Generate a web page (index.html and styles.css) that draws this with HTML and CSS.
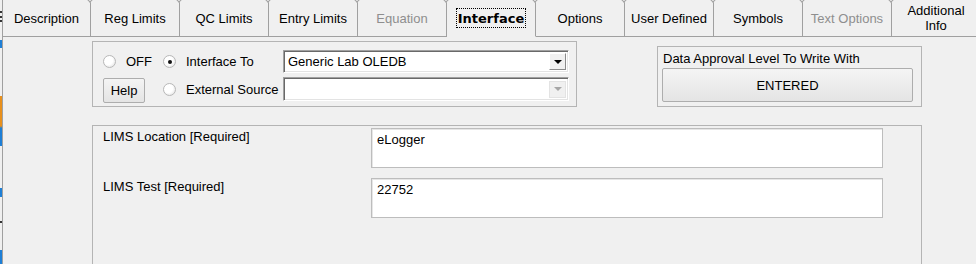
FILE: index.html
```html
<!DOCTYPE html>
<html lang="en">
<head>
  <meta charset="UTF-8">
  <title>Interface</title>
  <link rel="stylesheet" href="styles.css">
</head>
<body>
  <div class="window">
    <div class="edge"></div>
    <div class="main">
      <div class="tabs">
        <div class="tab first">Description</div>
        <div class="tab">Reg Limits</div>
        <div class="tab">QC Limits</div>
        <div class="tab">Entry Limits</div>
        <div class="tab disabled">Equation</div>
        <div class="tab active"><span class="focus">Interface</span></div>
        <div class="tab">Options</div>
        <div class="tab">User Defined</div>
        <div class="tab">Symbols</div>
        <div class="tab disabled">Text Options</div>
        <div class="tab">Additional<br>Info</div>
      </div>

      <div class="panel">
        <div class="top-row">
          <div class="group source">
            <label class="radio"><span class="dot"></span>OFF</label>
            <label class="radio checked"><span class="dot"></span>Interface To</label>
            <div class="combo">
              <span class="value">Generic Lab OLEDB</span>
              <span class="drop"><span class="arrow"></span></span>
            </div>

            <div class="cell"><button class="btn help">Help</button></div>
            <label class="radio"><span class="dot"></span>External Source</label>
            <div class="combo disabled">
              <span class="value"></span>
              <span class="drop"><span class="arrow"></span></span>
            </div>
          </div>

          <div class="group approval">
            <div class="caption">Data Approval Level To Write With</div>
            <button class="btn level">ENTERED</button>
          </div>
        </div>

        <div class="group lims">
          <div class="field">
            <span class="label">LIMS Location [Required]</span>
            <div class="textbox">eLogger</div>
          </div>
          <div class="field">
            <span class="label">LIMS Test [Required]</span>
            <div class="textbox">22752</div>
          </div>
        </div>
      </div>
    </div>
  </div>
</body>
</html>
```

FILE: styles.css
```css
body {
  margin: 0;
  width: 976px;
  height: 264px;
  overflow: hidden;
  background-color: #f0f0f0;
  font-family: "Liberation Sans", Arial, sans-serif;
  font-size: 13px;
  color: #000;
}

.window {
  display: flex;
  height: 264px;
  overflow: hidden;
}

/* bits of the window behind, peeking out on the left */
.edge {
  flex: none;
  width: 2px;
  background: linear-gradient(to bottom,
    #f0f0f0 0 11px, #333 11px 13px, #f0f0f0 13px 16px, #333 16px 18px,
    #f0f0f0 18px 20px, #333 20px 22px, #f0f0f0 22px 40px,
    #1e7fd6 40px 48px, #f0f0f0 48px 96px, #e8901c 96px 126px,
    #1e7fd6 128px 146px, #f0f0f0 146px 188px, #1e7fd6 188px 197px,
    #f0f0f0 197px 221px, #333 221px 223px, #f0f0f0 223px 250px,
    #1e7fd6 250px);
}

.main {
  flex: 1;
  min-width: 0;
  border-left: 1px solid #a0a0a0;
}

/* tab strip */
.tabs {
  display: flex;
  height: 37px;
}

.tab {
  flex: 0 0 89px;
  box-sizing: border-box;
  height: 37px;
  position: relative;
  display: flex;
  align-items: center;
  justify-content: center;
  text-align: center;
  line-height: 15px;
  border-right: 1px solid #a0a0a0;
  border-bottom: 1px solid #a0a0a0;
}

.tab.first {
  flex-basis: 88px;
}

.tab + .tab::before {
  content: "";
  position: absolute;
  left: -5px;
  top: -7px;
  width: 7px;
  height: 7px;
  border-right: 1px solid #a0a0a0;
  border-bottom: 1px solid #a0a0a0;
  background-color: #f0f0f0;
  transform: rotate(45deg);
}

.tab.disabled {
  color: #8e8e8e;
}

.tab.active {
  border-bottom-color: transparent;
}

.focus {
  font-family: "DejaVu Sans", sans-serif;
  font-weight: bold;
  font-size: 13px;
  padding: 2px 1px 1px;
  outline: 1px dotted #000;
}

/* page content */
.panel {
  height: 227px;
  overflow: hidden;
  padding-left: 89px;
}

.top-row {
  display: flex;
  align-items: flex-end;
  gap: 80px;
  margin-top: 4px;
}

.group {
  box-sizing: border-box;
  border: 1px solid #b4b4b4;
}

.source {
  width: 485px;
  height: 66px;
  padding: 8px 7px 0 10px;
  display: grid;
  grid-template-columns: 60px 120px 286px;
  grid-template-rows: 23px 24px;
  row-gap: 4px;
  align-items: center;
}

.radio {
  display: flex;
  align-items: center;
  white-space: nowrap;
}

.dot {
  width: 11px;
  height: 11px;
  margin-right: 10px;
  border: 1px solid #b8b8b8;
  border-radius: 50%;
  background: radial-gradient(circle at 40% 40%, #fff 0 45%, #e6e6e6 80%);
  display: flex;
  align-items: center;
  justify-content: center;
}

.radio.checked .dot::after {
  content: "";
  width: 4px;
  height: 4px;
  border-radius: 50%;
  background-color: #111;
}

.cell {
  align-self: start;
  margin-top: 1px;
}

.btn {
  font-family: inherit;
  font-size: 13px;
  color: #000;
  border: 1px solid #adadad;
  border-radius: 2px;
  background: linear-gradient(#f4f4f4, #e4e4e4);
  padding: 0;
}

.help {
  width: 42px;
  height: 25px;
}

.combo {
  box-sizing: border-box;
  height: 23px;
  display: flex;
  align-items: center;
  background-color: #fff;
  border: 1px solid;
  border-color: #a0a0a0 #fff #fff #a0a0a0;
  box-shadow: inset 1px 1px #696969, inset -1px -1px #e3e3e3;
}

.combo.disabled {
  height: 24px;
}

.combo .value {
  flex: 1;
  padding-left: 4px;
}

.drop {
  box-sizing: border-box;
  width: 17px;
  height: 17px;
  margin-right: 2px;
  display: flex;
  align-items: center;
  justify-content: center;
  background-color: #f0f0f0;
  border: 1px solid;
  border-color: #fff #8a8a8a #8a8a8a #fff;
}

.arrow {
  width: 0;
  height: 0;
  border-left: 4px solid transparent;
  border-right: 4px solid transparent;
  border-top: 4px solid #000;
}

.combo.disabled .drop {
  border-color: #e3e3e3;
}

.combo.disabled .arrow {
  border-top-color: #a6a6a6;
}

.approval {
  width: 265px;
  height: 61px;
  padding: 2px 8px 4px 4px;
}

.caption {
  height: 19px;
  line-height: 19px;
  padding-left: 1px;
}

.level {
  display: block;
  width: 100%;
  height: 34px;
}

.lims {
  width: 830px;
  height: 150px;
  margin-top: 18px;
  padding: 2px 0 0 10px;
  display: flex;
  flex-direction: column;
  gap: 10px;
}

.field {
  display: grid;
  grid-template-columns: 268px 512px;
}

.label {
  padding-top: 1px;
  line-height: 15px;
}

.textbox {
  box-sizing: border-box;
  height: 40px;
  padding: 3px 5px;
  line-height: 15px;
  background-color: #fff;
  border: 1px solid #bdbdbd;
  box-shadow: inset 1px 1px #e6e6e6;
}
```
